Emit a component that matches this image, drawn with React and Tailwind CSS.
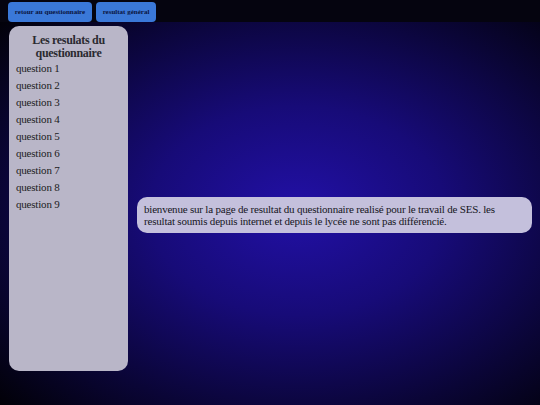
export default function App() {
  const questions = [1, 2, 3, 4, 5, 6, 7, 8, 9];

  return (
    <div className="w-[540px] h-[405px] overflow-hidden bg-[radial-gradient(ellipse_at_55%_52%,#2210a6_0%,#170b78_35%,#0a0536_70%,#000000_100%)] font-['Liberation_Serif',serif]">
      <div className="h-[22px] bg-[#05040f] flex gap-[4px] pl-[8px] pt-[2px]">
        <button className="h-[20px] w-[84px] rounded-[4px] bg-[#3a78d8] text-[7px] font-bold text-[#0a1440]">
          retour au questionnaire
        </button>
        <button className="h-[20px] w-[60px] rounded-[4px] bg-[#3a78d8] text-[7px] font-bold text-[#0a1440]">
          resultat général
        </button>
      </div>

      <div className="flex items-start">
        <div className="ml-[9px] mt-[4px] w-[119px] h-[345px] rounded-[10px] bg-[#b9b6c8] pt-[8px] pl-[7px]">
          <h1 className="text-center text-[12px] tracking-[-0.3px] leading-[13px] font-bold text-[#2a2a30] pr-[7px]">
            Les resulats du questionnaire
          </h1>
          <ul>
            {questions.map((n) => (
              <li key={n} className="text-[11px] tracking-[-0.2px] leading-[17px] text-[#1c1c22]">
                question {n}
              </li>
            ))}
          </ul>
        </div>

        <div className="ml-[9px] mt-[175px] w-[395px] h-[36px] rounded-[10px] bg-[#c4c0dc] px-[7px] pt-[6px] text-[11px] tracking-[-0.2px] leading-[12px] text-[#16161c]">
          bienvenue sur la page de resultat du questionnaire realisé pour le travail de SES. les resultat soumis depuis internet et depuis le lycée ne sont pas différencié.
        </div>
      </div>
    </div>
  );
}
